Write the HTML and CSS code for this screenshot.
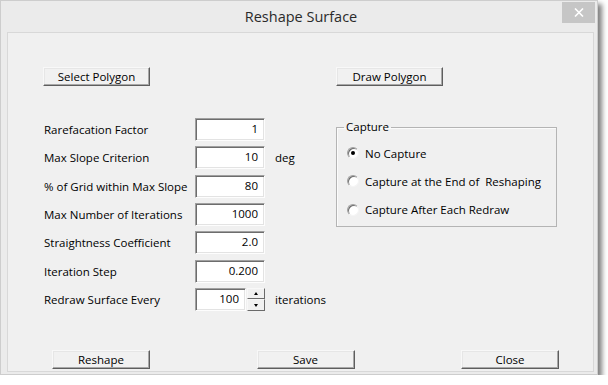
FILE: index.html
```html
<!DOCTYPE html>
<html>
<head>
<meta charset="utf-8">
<title>Reshape Surface</title>
<link rel="stylesheet" href="styles.css">
</head>
<body>
<div class="window">
  <div class="titlebar">
    <span class="spacer"></span>
    <div class="title">Reshape Surface</div>
    <button class="close" aria-label="Close">
      <svg width="10" height="9" viewBox="0 0 10 9"><path d="M1 0.5 L9 8.5 M9 0.5 L1 8.5" stroke="#fff" stroke-width="1.6" fill="none"/></svg>
    </button>
  </div>
  <div class="client">
    <div class="top-row">
      <button class="btn btn-wide">Select Polygon</button>
      <button class="btn btn-wide">Draw Polygon</button>
    </div>
    <div class="main">
      <div class="form">
        <div class="row"><span class="label">Rarefacation Factor</span><div class="field">1</div><span class="suffix"></span></div>
        <div class="row"><span class="label">Max Slope Criterion</span><div class="field">10</div><span class="suffix">deg</span></div>
        <div class="row"><span class="label">% of Grid within Max Slope</span><div class="field">80</div><span class="suffix"></span></div>
        <div class="row"><span class="label">Max Number of Iterations</span><div class="field">1000</div><span class="suffix"></span></div>
        <div class="row"><span class="label">Straightness Coefficient</span><div class="field">2.0</div><span class="suffix"></span></div>
        <div class="row"><span class="label">Iteration Step</span><div class="field">0.200</div><span class="suffix"></span></div>
        <div class="row"><span class="label">Redraw Surface Every</span>
          <div class="spin">
            <div class="field field-short">100</div>
            <div class="spinner">
              <div class="spin-btn"><span class="tri tri-up"></span></div>
              <div class="spin-btn"><span class="tri tri-down"></span></div>
            </div>
          </div>
          <span class="suffix">iterations</span></div>
      </div>
      <fieldset class="capture">
        <legend>Capture</legend>
        <div class="radios">
          <div class="radio-row"><span class="radio checked"></span><span>No Capture</span></div>
          <div class="radio-row"><span class="radio"></span><span>Capture at the End of&nbsp; Reshaping</span></div>
          <div class="radio-row"><span class="radio"></span><span>Capture After Each Redraw</span></div>
        </div>
      </fieldset>
    </div>
    <div class="bottom-row">
      <button class="btn btn-mid">Reshape</button>
      <button class="btn btn-mid">Save</button>
      <button class="btn btn-mid">Close</button>
    </div>
  </div>
</div>
</body>
</html>
```
FILE: styles.css
```css
html, body {
  margin: 0;
  background: #ffffff;
}
body {
  font-family: "Open Sans", "Noto Sans", sans-serif;
  font-size: 11.5px;
  color: #000;
}
.window {
  width: 598px;
  height: 375px;
  box-sizing: border-box;
  border: 1px solid #cdcdcd;
  background: #ebebeb;
  box-shadow: 4px 4px 5px rgba(0, 0, 0, 0.5);
  display: flex;
  flex-direction: column;
}
.titlebar {
  height: 31px;
  display: grid;
  grid-template-columns: 1fr auto 1fr;
  align-items: start;
}
.title {
  font-size: 14.5px;
  line-height: 31px;
  color: #2a2a2a;
  padding-left: 4px;
}
.close {
  justify-self: end;
  width: 33px;
  height: 21px;
  margin: 1px 2px 0 0;
  padding: 0;
  border: 0;
  background: #c6c6c6;
  display: flex;
  align-items: center;
  justify-content: center;
}
.client {
  flex: 1;
  margin: 0 3px 2px 6px;
  border: 1px solid #d8d8d8;
  background: #f0f0f0;
  display: flex;
  flex-direction: column;
  padding: 34px 0 2px 35px;
}
.btn {
  box-sizing: border-box;
  height: 19px;
  padding: 0;
  font: inherit;
  color: #000;
  line-height: 16px;
  background: #f1f1f1;
  border: 1px solid;
  border-color: #f8f8f8 #5e5e5e #5e5e5e #f8f8f8;
  box-shadow: inset -1px -1px 0 #a8a8a8, inset 1px 1px 0 #e6e6e6;
}
.btn-wide { width: 107px; }
.btn-mid { width: 98px; }
.top-row {
  display: grid;
  grid-template-columns: 293px 107px;
}
.main {
  margin-top: 32px;
  display: grid;
  grid-template-columns: 293px 221px;
  align-items: start;
}
.form {
  display: flex;
  flex-direction: column;
  gap: 5.33px;
}
.row {
  display: grid;
  grid-template-columns: 152px 70px auto;
  align-items: center;
  height: 23px;
}
.label { padding-left: 1px; }
.suffix { padding-left: 10px; }
.field {
  box-sizing: border-box;
  width: 70px;
  height: 23px;
  background: #fff;
  border: 1px solid;
  border-color: #a0a0a0 #fdfdfd #fdfdfd #a0a0a0;
  box-shadow: inset 1px 1px 0 #6d6d6d, inset -1px -1px 0 #e3e3e3;
  text-align: right;
  padding-right: 6px;
  line-height: 20px;
}
.spin {
  display: flex;
  gap: 1px;
}
.field-short { width: 51px; }
.spinner {
  width: 18px;
  height: 23px;
  display: flex;
  flex-direction: column;
}
.spin-btn {
  flex: 1;
  box-sizing: border-box;
  background: #f1f1f1;
  border: 1px solid;
  border-color: #f8f8f8 #6a6a6a #6a6a6a #f8f8f8;
  display: flex;
  align-items: center;
  justify-content: center;
}
.tri {
  width: 0;
  height: 0;
  border-left: 2.5px solid transparent;
  border-right: 2.5px solid transparent;
}
.tri-up { border-bottom: 3px solid #000; }
.tri-down { border-top: 3px solid #000; }
.capture {
  margin: 1px 0 0 0;
  padding: 10px 0 0 10px;
  height: 108px;
  box-sizing: border-box;
  min-width: 0;
  border: 1px solid #b4b4b4;
  box-shadow: inset 1px 1px 0 #fbfbfb;
}
.capture legend {
  padding: 0 2px;
  margin-left: -3px;
  line-height: 16px;
}
.radios {
  display: flex;
  flex-direction: column;
  gap: 12.4px;
}
.radio-row {
  display: flex;
  align-items: center;
  gap: 6px;
  height: 16px;
}
.radio {
  width: 12px;
  height: 12px;
  box-sizing: border-box;
  border-radius: 50%;
  background: #fff;
  border: 1px solid;
  border-color: #a0a0a0 #f4f4f4 #f4f4f4 #a0a0a0;
  box-shadow: inset 1px 1px 0 #6d6d6d;
  display: flex;
  align-items: center;
  justify-content: center;
}
.radio.checked::after {
  content: "";
  width: 4px;
  height: 4px;
  border-radius: 50%;
  background: #000;
}
.bottom-row {
  margin-top: auto;
  display: flex;
  gap: 106.5px;
  padding-left: 9px;
}
```
